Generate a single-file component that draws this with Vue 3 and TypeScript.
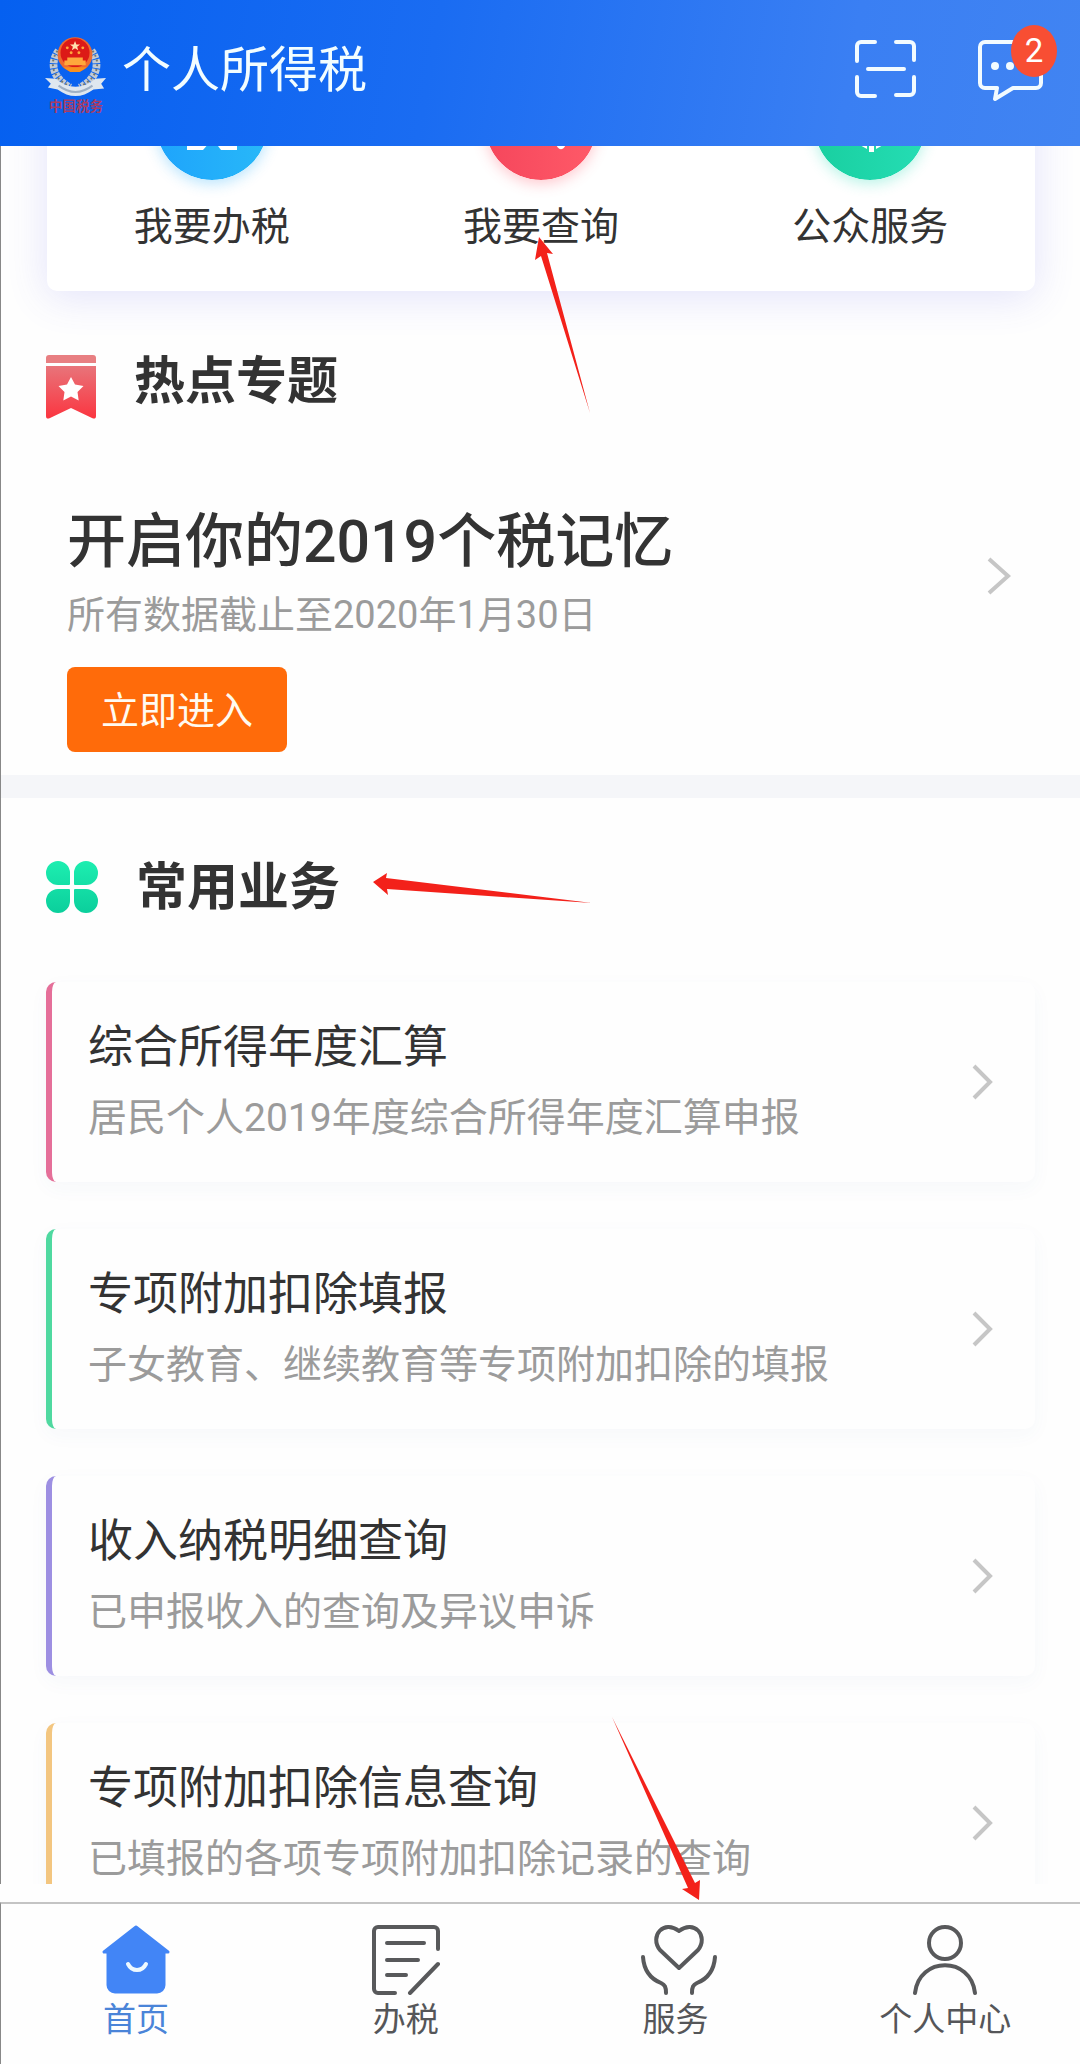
<script setup lang="ts">
interface Service {
  title: string
  note: string
  accent: string
}

const services: Service[] = [
  { title: '综合所得年度汇算', note: '居民个人2019年度综合所得年度汇算申报', accent: 'pink' },
  { title: '专项附加扣除填报', note: '子女教育、继续教育等专项附加扣除的填报', accent: 'green' },
  { title: '收入纳税明细查询', note: '已申报收入的查询及异议申诉', accent: 'purple' },
  { title: '专项附加扣除信息查询', note: '已填报的各项专项附加扣除记录的查询', accent: 'orange' },
]
</script>

<template>
  <div class="app">
    <header class="topbar">
      <svg class="emblem" viewBox="0 0 64 88" aria-hidden="true">
        <g fill="none" stroke="#c3cad3" stroke-width="8" stroke-dasharray="4 1">
          <path d="M14 20C5 32 7 48 26 58" />
          <path d="M48 20c9 12 7 28-12 38" />
        </g>
        <g fill="none" stroke="#75786f" stroke-width="2" stroke-dasharray="2 3">
          <path d="M13 20C4 32 7 48 26 57" />
          <path d="M49 20c9 12 6 28-13 37" />
        </g>
        <path d="M0 48l11 1c12 11 29 11 41 0l11-1-5 6 3 5-11 1c-12 9-25 9-37 0L3 58l3-4z" fill="#dfe7ef" />
        <path d="M14 56c12 9 23 9 35 0" fill="none" stroke="#9fb0c4" stroke-width="2" />
        <circle cx="31" cy="24" r="18" fill="#ee6a30" />
        <circle cx="31" cy="22" r="15" fill="#dc1a17" />
        <path d="M31 10l1.400 3.600h3.800l-3 2.300 1.100 3.700-3.300-2.200-3.300 2.200 1.100-3.700-3-2.300h3.800z" fill="#ffe2b0" />
        <g fill="#ffa83c">
          <circle cx="23" cy="17" r="1.500" /><circle cx="39" cy="17" r="1.500" />
          <circle cx="27" cy="22" r="1.500" /><circle cx="35" cy="22" r="1.500" />
          <path d="M23 27h16v3h3v5H20v-5h3z" />
        </g>
        <path d="M19 37h24l-7 5h-10z" fill="#f8901e" />
        <text x="32" y="82" text-anchor="middle" class="emblem-text">中国税务</text>
      </svg>
      <h1 class="app-name">个人所得税</h1>
      <button class="icon-btn" type="button" aria-label="扫一扫">
        <svg width="64" height="64" viewBox="0 0 64 64" fill="none" stroke="#f2fbff" stroke-width="4" stroke-linecap="round" stroke-linejoin="round">
          <path d="M22 3H8a4 4 0 0 0-4 4v15M43 3h14a4 4 0 0 1 4 4v14M4 38v15a4 4 0 0 0 4 4h14M61 38v14a4 4 0 0 1-4 4H43M15 30h36" />
        </svg>
      </button>
      <button class="icon-btn chat" type="button" aria-label="消息">
        <svg width="68" height="64" viewBox="0 0 68 64" fill="none" stroke="#f2fbff" stroke-width="4" stroke-linejoin="round">
          <path d="M8 3h51a5 5 0 0 1 5 5v36a5 5 0 0 1-5 5H36L18 60l2-11H8a5 5 0 0 1-5-5V8a5 5 0 0 1 5-5z" />
          <g fill="#f2fbff" stroke="none"><circle cx="18" cy="27" r="4" /><circle cx="33" cy="27" r="4" /><circle cx="48" cy="27" r="4" /></g>
        </svg>
        <span class="badge">2</span>
      </button>
    </header>

    <main class="scroller">
      <nav class="quick">
        <a class="quick-item" href="#">
          <svg class="disc disc-blue" viewBox="0 0 112 112" aria-hidden="true">
            <defs><linearGradient id="blue" x1="0" x2="1"><stop offset="0" stop-color="#1ea4fc" /><stop offset="1" stop-color="#28b8f8" /></linearGradient></defs>
            <circle cx="56" cy="56" r="56" fill="url(#blue)" />
            <path d="M31 36h23v38l-7 8H31zM59 36h22v46H65l-6-8z" fill="#fff" />
          </svg>
          <span>我要办税</span>
        </a>
        <a class="quick-item" href="#">
          <svg class="disc disc-red" viewBox="0 0 112 112" aria-hidden="true">
            <defs><linearGradient id="red" x1="0" x2="1"><stop offset="0" stop-color="#f5465c" /><stop offset="1" stop-color="#ff5a68" /></linearGradient></defs>
            <circle cx="56" cy="56" r="56" fill="url(#red)" />
            <g fill="none" stroke="#fff" stroke-width="8" stroke-linecap="round"><circle cx="52" cy="50" r="18" /><path d="M66 64l10 13" /></g>
          </svg>
          <span>我要查询</span>
          <svg class="arrow arrow-query" width="60" height="180" viewBox="0 0 60 180" aria-hidden="true"><path d="M4 1l14 17-6-1 43 160L6 20l-6 4z" fill="#f3211a" /></svg>
        </a>
        <a class="quick-item" href="#">
          <svg class="disc disc-green" viewBox="0 0 112 112" aria-hidden="true">
            <defs><linearGradient id="mint" x1="0" x2="1"><stop offset="0" stop-color="#19cfa0" /><stop offset="1" stop-color="#25ddb4" /></linearGradient></defs>
            <circle cx="56" cy="56" r="56" fill="url(#mint)" />
            <path d="M44 76l9 5v-5zM55 76v8h5v-8zM62 76v5l9-5z" fill="#fff" />
          </svg>
          <span>公众服务</span>
        </a>
      </nav>

      <section class="hot">
        <header class="section-head">
          <svg width="50" height="64" viewBox="0 0 50 64" aria-hidden="true">
            <defs><linearGradient id="flag" x1="0" y1="0" x2="0" y2="1"><stop offset="0" stop-color="#e8747a" /><stop offset="1" stop-color="#fb3540" /></linearGradient></defs>
            <path d="M3 0h44a3 3 0 0 1 3 3v5H0V3a3 3 0 0 1 3-3z" fill="#e87f82" />
            <path d="M0 11h50v50c0 3-2 3-4 2L25 53 4 63c-2 1-4 1-4-2z" fill="url(#flag)" />
            <path d="M25 22l4 7.500 8.500 1.500-6 6 1.200 8.500L25 41.500 17.300 45.500 18.500 37l-6-6 8.500-1.500z" fill="#fff" />
          </svg>
          <h2>热点专题</h2>
        </header>
        <div class="topic">
          <div class="topic-row">
            <div>
              <h3>开启你的2019个税记忆</h3>
              <p>所有数据截止至2020年1月30日</p>
            </div>
            <svg class="chevron" width="24" height="38" viewBox="0 0 24 38" aria-hidden="true"><path d="M2 2l19 17L2 36" /></svg>
          </div>
          <button class="enter" type="button">立即进入</button>
        </div>
      </section>

      <section class="common">
        <header class="section-head">
          <svg width="52" height="52" viewBox="0 0 52 52" aria-hidden="true">
            <defs><linearGradient id="clover" x1="0" y1="0" x2="0" y2="52" gradientUnits="userSpaceOnUse"><stop offset="0" stop-color="#1deeb0" /><stop offset="1" stop-color="#0bcf9c" /></linearGradient></defs>
            <path fill="url(#clover)" d="M12 0a12 12 0 0 1 12 12v11a1 1 0 0 1-1 1H12A12 12 0 0 1 12 0zM40 0a12 12 0 0 1 0 24H29a1 1 0 0 1-1-1V12A12 12 0 0 1 40 0zM12 28h11a1 1 0 0 1 1 1v11a12 12 0 1 1-12-12zM29 28h11a12 12 0 1 1-12 12V29a1 1 0 0 1 1-1z" />
          </svg>
          <h2>
            常用业务
            <svg class="arrow arrow-common" width="222" height="34" viewBox="0 0 222 34" aria-hidden="true"><path d="M1 10L15 1l-1 5 206 25-205-14 1 6z" fill="#f3211a" /></svg>
          </h2>
        </header>
        <ul class="list">
          <li v-for="item in services" :key="item.title">
            <a class="service" :class="item.accent" href="#">
              <span class="service-text">
                <strong>{{ item.title }}</strong>
                <span>{{ item.note }}</span>
              </span>
              <svg class="chevron" width="21" height="36" viewBox="0 0 21 36" aria-hidden="true"><path d="M2 2l16 16L2 34" /></svg>
            </a>
          </li>
        </ul>
      </section>
    </main>

    <nav class="tabs">
      <a class="tab active" href="#">
        <svg width="72" height="72" viewBox="0 0 72 72" aria-hidden="true">
          <path d="M36 4L4 29h4v33a7 7 0 0 0 7 7h42a7 7 0 0 0 7-7V29h4z" fill="#4285f6" stroke="#4285f6" stroke-width="3" stroke-linejoin="round" />
          <path class="smile" d="M28 41c4 8 14 8 18 0" />
        </svg>
        <span>首页</span>
      </a>
      <a class="tab" href="#">
        <svg width="72" height="72" viewBox="0 0 72 72" aria-hidden="true">
          <path d="M68 26V8a4 4 0 0 0-4-4H8a4 4 0 0 0-4 4v58a4 4 0 0 0 4 4h17M17 20h37M17 37h31M17 52h19M68 41L40 70" />
        </svg>
        <span>办税</span>
      </a>
      <a class="tab" href="#">
        <svg width="88" height="72" viewBox="0 0 88 72" aria-hidden="true">
          <path d="M48 45L29 27C18 13 33-4 48 8 63-4 78 13 67 27zM12 34c1 14 8 22 18 26 4 2 5 4 5 10M84 34c-1 14-8 22-18 26-4 2-5 4-5 10" />
        </svg>
        <span>服务</span>
        <svg class="arrow arrow-service" width="94" height="186" viewBox="0 0 94 186" aria-hidden="true"><path d="M3 3l83 166 5-3-1 20-17-11 6-1z" fill="#f3211a" /></svg>
      </a>
      <a class="tab" href="#">
        <svg width="72" height="72" viewBox="0 0 72 72" aria-hidden="true">
          <circle cx="36" cy="20" r="16" />
          <path d="M6 70C10 33 62 33 66 70" />
        </svg>
        <span>个人中心</span>
      </a>
    </nav>
  </div>
</template>

<style>
body {
  margin: 0;
  background: #fefefe;
}
</style>

<style scoped>
.app {
  display: flex;
  flex-direction: column;
  height: 100vh;
  font-family: Roboto, "Noto Sans CJK SC", sans-serif;
  color: #333;
  box-sizing: border-box;
}
h1, h2, h3, p, ul {
  margin: 0;
  padding: 0;
}
a {
  color: inherit;
  text-decoration: none;
}
svg {
  display: block;
  flex: none;
}
.topbar {
  position: relative;
  z-index: 2;
  flex: none;
  display: flex;
  align-items: center;
  height: 146px;
  box-sizing: border-box;
  padding: 0 35px 4px 45px;
  background: linear-gradient(100deg, #0560f0 0%, #1a6cf2 40%, #3a7ff3 78%, #4184f2 100%);
}
.emblem {
  width: 62px;
  height: 86px;
  margin-top: 6px;
}
.emblem-text {
  font-family: "Noto Sans CJK SC", sans-serif;
  font-size: 14px;
  font-weight: 700;
  fill: #a83c64;
}
.app-name {
  flex: 1;
  margin-left: 15px;
  font-size: 49px;
  line-height: 72px;
  font-weight: 400;
  color: #f2fdff;
}
.icon-btn {
  position: relative;
  padding: 0;
  border: 0;
  background: none;
}
.chat {
  margin-left: 60px;
}
.badge {
  position: absolute;
  top: -14px;
  right: -12px;
  width: 46px;
  height: 52px;
  border-radius: 50%;
  background: #f84e33;
  color: #fff;
  font: 33px/52px Roboto, sans-serif;
  text-align: center;
}
.scroller {
  flex: 1;
  min-height: 0;
  margin-bottom: 18px;
  overflow: hidden;
  border-left: 1px solid #888;
}
.quick {
  display: grid;
  grid-template-columns: repeat(3, 1fr);
  margin: -98px 45px 0 46px;
  padding: 20px 0 38px;
  border-radius: 10px;
  background: #fff;
  box-shadow: 0 6px 40px rgba(80, 80, 230, 0.16);
}
.quick-item {
  position: relative;
  display: flex;
  flex-direction: column;
  align-items: center;
  gap: 21px;
  font-size: 39px;
  line-height: 52px;
}
.disc {
  width: 112px;
  height: 112px;
  border-radius: 50%;
}
.disc-blue {
  box-shadow: 0 4px 14px rgba(30, 170, 250, 0.3);
}
.disc-red {
  box-shadow: 0 4px 14px rgba(255, 80, 100, 0.3);
}
.disc-green {
  box-shadow: 0 4px 14px rgba(30, 220, 180, 0.3);
}
.arrow {
  position: absolute;
  z-index: 1;
  pointer-events: none;
}
.arrow-query {
  top: 168px;
  left: calc(50% - 6px);
}
.arrow-common {
  top: 11px;
  left: calc(100% + 32px);
}
.arrow-service {
  right: 107px;
  bottom: 164px;
}
.hot {
  padding: 64px 0 23px;
  border-bottom: 23px solid #f5f6f9;
}
.section-head {
  display: flex;
  align-items: flex-start;
  gap: 38px;
  padding: 0 45px;
}
.section-head h2 {
  position: relative;
  font-size: 51px;
  line-height: 54px;
  font-weight: 700;
}
.topic {
  margin-top: 91px;
  padding: 0 69px 0 66px;
}
.topic-row {
  display: flex;
  align-items: center;
  justify-content: space-between;
}
.topic h3 {
  font-size: 59px;
  line-height: 64px;
  font-weight: 500;
}
.topic p {
  margin-top: 15px;
  font-size: 38px;
  line-height: 52px;
  color: #9b9b9b;
}
.chevron {
  fill: none;
  stroke: #c6c6c6;
  stroke-width: 4;
}
.enter {
  margin-top: 26px;
  padding: 0 34px 4px;
  height: 85px;
  border: 0;
  border-radius: 8px;
  background: #ff6b0a;
  color: #fffaf0;
  font-family: inherit;
  font-size: 38px;
}
.common {
  padding-top: 63px;
}
.list {
  display: flex;
  flex-direction: column;
  gap: 47px;
  margin: 67px 45px 0;
  list-style: none;
}
.service {
  display: flex;
  align-items: center;
  justify-content: space-between;
  padding: 36px 42px 36px 36px;
  border-left: 6px solid;
  border-radius: 10px;
  background: #fefefe;
  box-shadow: 0 6px 20px rgba(60, 110, 160, 0.04);
}
.service-text {
  display: flex;
  flex-direction: column;
  gap: 12px;
  font-size: 39px;
  line-height: 56px;
  color: #9b9b9b;
}
.service-text strong {
  font-size: 45px;
  line-height: 60px;
  font-weight: 400;
  color: #333;
}
.pink { border-color: #e56f99; }
.green { border-color: #4fd9a0; }
.purple { border-color: #9d8fe2; }
.orange { border-color: #f3c680; }
.tabs {
  flex: none;
  display: grid;
  grid-template-columns: repeat(4, 1fr);
  height: 162px;
  box-sizing: border-box;
  border-top: 2px solid #c4c4c4;
  border-left: 1px solid #888;
}
.tab {
  position: relative;
  display: flex;
  flex-direction: column;
  align-items: center;
  gap: 3px;
  padding-top: 19px;
  font-size: 33px;
  line-height: 44px;
  color: #555659;
}
.tab > svg:first-child {
  fill: none;
  stroke: #58595b;
  stroke-width: 4;
  stroke-linecap: round;
  stroke-linejoin: round;
}
.tab .smile {
  stroke: #eef9ff;
}
.tab.active {
  color: #4a84d8;
}
</style>
